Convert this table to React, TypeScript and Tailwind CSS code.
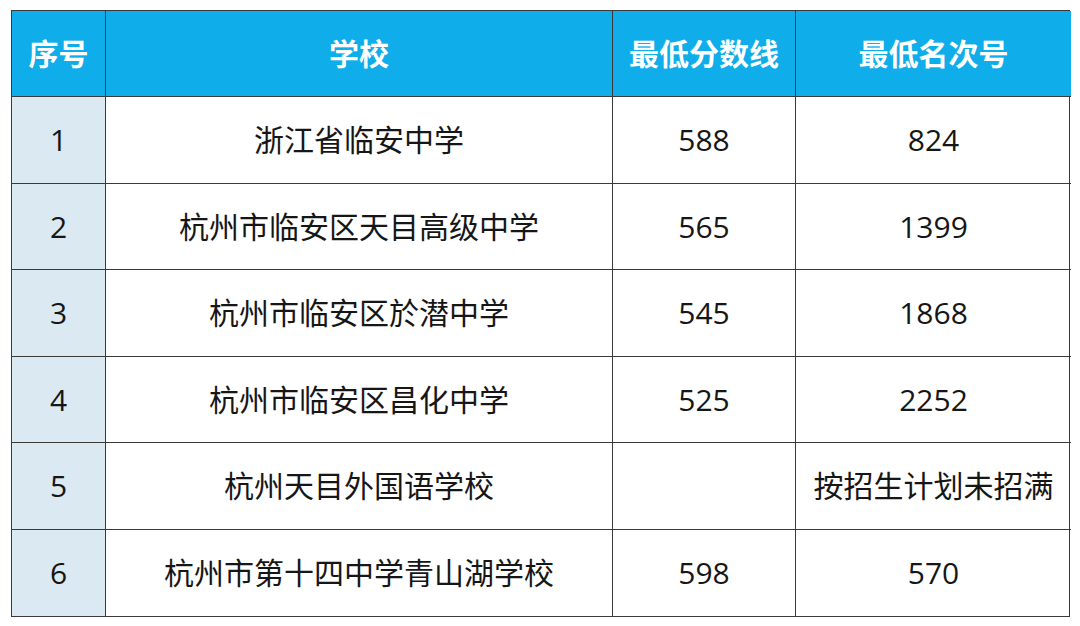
import React from "react";

const rows = [
  { no: "1", school: "浙江省临安中学", score: "588", rank: "824" },
  { no: "2", school: "杭州市临安区天目高级中学", score: "565", rank: "1399" },
  { no: "3", school: "杭州市临安区於潜中学", score: "545", rank: "1868" },
  { no: "4", school: "杭州市临安区昌化中学", score: "525", rank: "2252" },
  { no: "5", school: "杭州天目外国语学校", score: "", rank: "按招生计划未招满" },
  { no: "6", school: "杭州市第十四中学青山湖学校", score: "598", rank: "570" },
];

const font = "font-['Open_Sans','Noto_Sans_CJK_SC',sans-serif]";

export default function App() {
  return (
    <div className={`w-[1080px] h-[626px] bg-white pt-[10px] pl-[11px] ${font}`}>
      <div className="w-[1059px] grid grid-cols-[94px_507px_183px_275px] border-[1.5px] border-[#3a3a3a] text-[#161616]">
        {["序号", "学校", "最低分数线", "最低名次号"].map((h, i) => (
          <div
            key={h}
            className={`h-[86px] bg-[#0fadea] flex items-center justify-center text-white font-bold text-[30px] border-b-[1.5px] border-[#3a3a3a] ${i < 3 ? "border-r-[1.5px]" : ""}`}
          >
            {h}
          </div>
        ))}
        {rows.map((r, idx) => {
          const last = idx === rows.length - 1;
          const cell = `h-[86.5px] flex items-center justify-center text-[30px] border-[#3a3a3a] ${last ? "" : "border-b-[1.5px]"}`;
          return (
            <React.Fragment key={r.no}>
              <div className={`${cell} bg-[#dbe9f2] border-r-[1.5px]`}>{r.no}</div>
              <div className={`${cell} border-r-[1.5px]`}>{r.school}</div>
              <div className={`${cell} border-r-[1.5px]`}>{r.score}</div>
              <div className={cell}>{r.rank}</div>
            </React.Fragment>
          );
        })}
      </div>
    </div>
  );
}
